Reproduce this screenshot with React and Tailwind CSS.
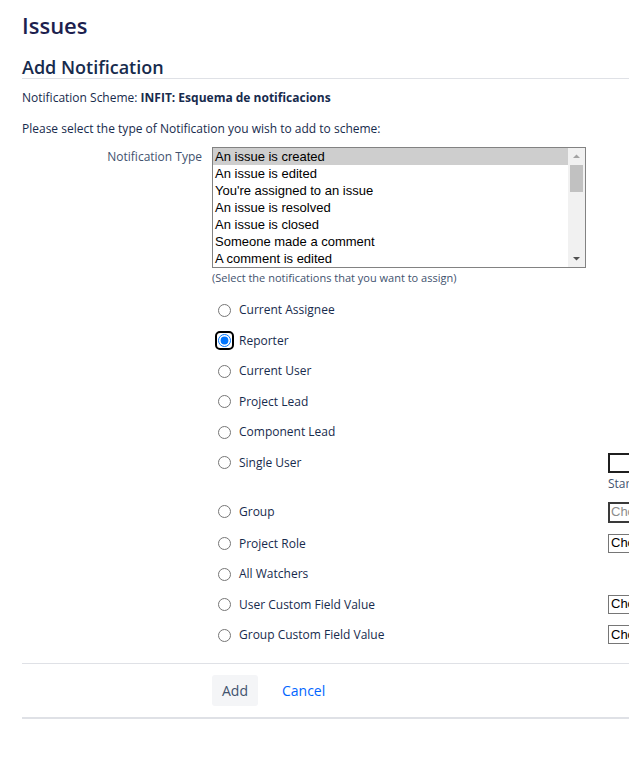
import { useState } from "react";

const types = [
  "An issue is created",
  "An issue is edited",
  "You're assigned to an issue",
  "An issue is resolved",
  "An issue is closed",
  "Someone made a comment",
  "A comment is edited",
];

const recipients = [
  { id: "assignee", label: "Current Assignee", h: "h-[30.5px]" },
  { id: "reporter", label: "Reporter", h: "h-[30.5px]" },
  { id: "user", label: "Current User", h: "h-[30.5px]" },
  { id: "lead", label: "Project Lead", h: "h-[30.5px]" },
  { id: "complead", label: "Component Lead", h: "h-[30.5px]" },
  { id: "single", label: "Single User", h: "h-[49px]", field: "user" },
  { id: "group", label: "Group", h: "h-[32px]", field: "group" },
  { id: "role", label: "Project Role", h: "h-[30.5px]", field: "select", text: "Choose a project role" },
  { id: "watchers", label: "All Watchers", h: "h-[30.5px]" },
  { id: "ucf", label: "User Custom Field Value", h: "h-[30.5px]", field: "select", text: "Choose a custom field" },
  { id: "gcf", label: "Group Custom Field Value", h: "h-[30.5px]", field: "select", text: "Choose a custom field" },
];

function Field({ row }) {
  if (row.field === "user") {
    return (
      <div className="flex flex-col">
        <div className="h-[20px] w-[120px] border-2 border-[#1f1f1f] bg-white" />
        <span className="mt-[2px] whitespace-nowrap text-[12px] text-[#42526e]">Start typing</span>
      </div>
    );
  }
  if (row.field === "group") {
    return (
      <div className="flex h-[21px] w-[100px] items-center border-2 border-[#3a3a3a] bg-white pl-[1px] text-[13px] text-[#8c8c8c] font-['Liberation_Sans',sans-serif] whitespace-nowrap">
        Choose
      </div>
    );
  }
  return (
    <div className="flex h-[19px] w-[100px] items-center border border-[#767676] bg-white pl-[2px] text-[13px] text-black font-['Liberation_Sans',sans-serif] whitespace-nowrap">
      {row.text}
    </div>
  );
}

export default function App() {
  const [selected, setSelected] = useState("reporter");

  return (
    <div className="w-[629px] h-[757px] overflow-hidden bg-white font-['Open_Sans',sans-serif] text-[#172b4d]">
      <div className="w-[900px] pl-[22px] pt-[8px]">
        <h1 className="text-[22px] font-semibold leading-[34px] text-[#1d1f4f]">Issues</h1>

        <h2 className="mt-[14px] w-[607px] border-b border-[#dfe1e6] text-[18px] font-semibold leading-[22px]">
          Add Notification
        </h2>

        <p className="mt-[10px] text-[12px] leading-[18px]">
          Notification Scheme: <b className="font-bold">INFIT: Esquema de notificacions</b>
        </p>

        <p className="mt-[13px] text-[12px] leading-[18px]">
          Please select the type of Notification you wish to add to scheme:
        </p>

        <div className="mt-[9px] flex">
          <label className="w-[180px] pt-[1px] text-right text-[12px] leading-[18px] text-[#42526e]">Notification Type</label>
          <div className="ml-[10px] flex flex-col">
            <div className="flex h-[121px] w-[374px] border border-[#828282] bg-white font-['Liberation_Sans',sans-serif] text-[13px] text-black">
              <ul className="flex-1 overflow-hidden">
                {types.map((t, i) => (
                  <li key={t} className={`h-[17px] pl-[2px] leading-[17px] ${i === 0 ? "bg-[#cecece]" : ""}`}>
                    {t}
                  </li>
                ))}
              </ul>
              <div className="flex w-[17px] flex-col items-center bg-[#f1f1f1]">
                <svg width="17" height="17" viewBox="0 0 17 17">
                  <path d="M5 10 L8.5 6.5 L12 10 Z" fill="#a3a3a3" />
                </svg>
                <div className="h-[27px] w-[13px] bg-[#c1c1c1]" />
                <div className="flex-1" />
                <svg width="17" height="17" viewBox="0 0 17 17">
                  <path d="M5 7 L8.5 10.5 L12 7 Z" fill="#505050" />
                </svg>
              </div>
            </div>
            <span className="mt-[2px] text-[11px] leading-[16px] text-[#42526e]">
              (Select the notifications that you want to assign)
            </span>
          </div>
        </div>

        <div className="ml-[190px] mt-[9px] flex flex-col">
          {recipients.map((r) => (
            <div key={r.id} className={`flex ${r.h}`}>
              <label className="flex h-[30px] w-[396px] cursor-pointer items-center gap-[8px] pl-[6px] text-[12px] text-[#172b4d]">
                {r.id === selected ? (
                  <span className="-m-[3px] inline-flex rounded-[5px] border-2 border-black p-[1px]">
                    <input
                      type="radio"
                      name="recipient"
                      checked
                      onChange={() => setSelected(r.id)}
                      className="m-0 h-[13px] w-[13px] accent-[#0075ff]"
                    />
                  </span>
                ) : (
                  <input
                    type="radio"
                    name="recipient"
                    checked={false}
                    onChange={() => setSelected(r.id)}
                    className="m-0 h-[13px] w-[13px]"
                  />
                )}
                {r.label}
              </label>
              {r.field && (
                <div className="pt-[5px]">
                  <Field row={r} />
                </div>
              )}
            </div>
          ))}
        </div>

        <div className="mt-[12px] w-[607px] border-t border-[#dfe1e6]" />
        <div className="ml-[190px] mt-[11px] flex items-center gap-[24px]">
          <button className="h-[31px] rounded-[3px] bg-[#f4f5f7] px-[10px] text-[14px] text-[#42526e]">Add</button>
          <a href="#" className="text-[14px] text-[#0065ff]">Cancel</a>
        </div>
        <div className="mt-[11px] w-[607px] border-t-2 border-[#dfe1e6]" />
      </div>
    </div>
  );
}
